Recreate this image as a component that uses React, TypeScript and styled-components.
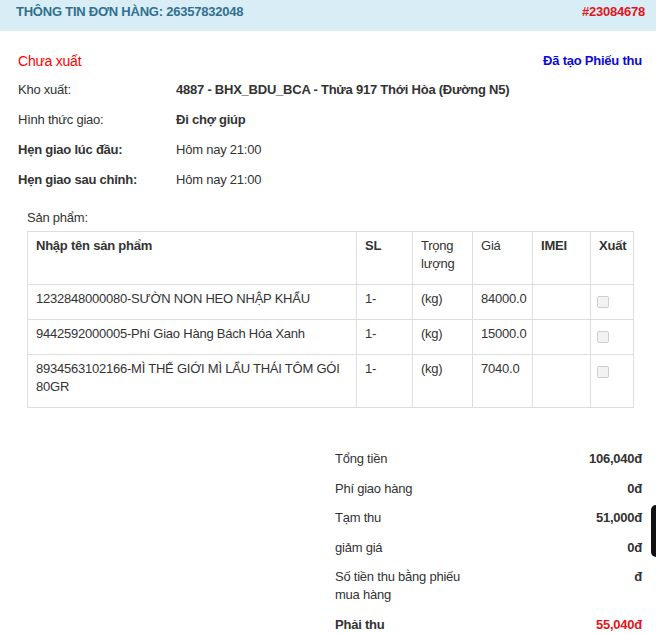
import React from "react";
import styled, { createGlobalStyle } from "styled-components";

const GlobalStyle = createGlobalStyle`
  html, body {
    margin: 0;
    padding: 0;
    background: #fff;
  }
  body {
    font-family: "Liberation Sans", Arial, sans-serif;
    font-size: 13px;
    line-height: 18px;
    letter-spacing: -0.23px;
    color: #333;
  }
  * { box-sizing: border-box; }
`;

const Page = styled.div`
  position: relative;
  width: 656px;
`;

const Header = styled.div`
  height: 31px;
  background: #d9edf7;
  display: flex;
  justify-content: space-between;
  align-items: flex-start;
  padding: 3px 11px 0 16px;
  font-weight: bold;
`;

const HeaderTitle = styled.span`
  color: #31708f;
`;

const OrderCode = styled.span`
  color: #e3151a;
`;

const Body = styled.div`
  padding: 15px 14px 0 18px;
`;

const StatusRow = styled.div`
  display: flex;
  justify-content: space-between;
  align-items: center;
  height: 29px;
  padding: 6px 0 5px;
`;

const Status = styled.span`
  color: #f00;
  font-size: 14px;
  line-height: 18px;
`;

const ReceiptLink = styled.span`
  color: #0b0bd4;
  font-weight: bold;
`;

const InfoRow = styled.div`
  display: grid;
  grid-template-columns: 158px 1fr;
  padding: 6px 0;
`;

const Label = styled.span<{ $bold?: boolean }>`
  font-weight: ${(p) => (p.$bold ? "bold" : "normal")};
`;

const Value = styled.span<{ $bold?: boolean }>`
  font-weight: ${(p) => (p.$bold ? "bold" : "normal")};
`;

const Products = styled.div`
  padding: 14px 9px 0 9px;
`;

const ProductsLabel = styled.div`
  margin-bottom: 4px;
`;

const Table = styled.table`
  width: 606px;
  table-layout: fixed;
  border-collapse: collapse;
`;

const Col = styled.col<{ $w: number }>`
  width: ${(p) => p.$w}px;
`;

const Th = styled.th<{ $light?: boolean }>`
  border: 1px solid #ddd;
  padding: 5px 8px 11px;
  text-align: left;
  vertical-align: top;
  font-weight: ${(p) => (p.$light ? "normal" : "bold")};
`;

const Td = styled.td`
  border: 1px solid #ddd;
  padding: 5px 8px 11px;
  vertical-align: top;
`;

const Check = styled.span`
  display: block;
  width: 12px;
  height: 12px;
  margin: 6px 0 0 -2px;
  border: 1px solid #cfcfcf;
  border-radius: 2px;
  background: #f2f2f2;
`;

const Summary = styled.div`
  width: 307px;
  margin: 36px 0 0 auto;
`;

const SumRow = styled.div`
  display: grid;
  grid-template-columns: 145px 1fr;
  padding: 6px 0 5.5px;
`;

const SumLabel = styled.span<{ $bold?: boolean }>`
  font-weight: ${(p) => (p.$bold ? "bold" : "normal")};
`;

const SumValue = styled.span<{ $red?: boolean }>`
  text-align: right;
  font-weight: bold;
  color: ${(p) => (p.$red ? "#e3151a" : "#333")};
`;

const SideTab = styled.div`
  position: absolute;
  right: 0;
  top: 505px;
  width: 5px;
  height: 52px;
  background: #111;
  border-radius: 6px 0 0 6px;
`;

const info = [
  { label: "Kho xuất:", value: "4887 - BHX_BDU_BCA - Thửa 917 Thới Hòa (Đường N5)", lb: false, vb: true },
  { label: "Hình thức giao:", value: "Đi chợ giúp", lb: false, vb: true },
  { label: "Hẹn giao lúc đầu:", value: "Hôm nay 21:00", lb: true, vb: false },
  { label: "Hẹn giao sau chỉnh:", value: "Hôm nay 21:00", lb: true, vb: false },
];

const columns = [
  { title: "Nhập tên sản phẩm", w: 329, light: false },
  { title: "SL", w: 56, light: false },
  { title: "Trọng lượng", w: 60, light: true },
  { title: "Giá", w: 60, light: true },
  { title: "IMEI", w: 58, light: false },
  { title: "Xuất", w: 43, light: false },
];

const products = [
  { name: "1232848000080-SƯỜN NON HEO NHẬP KHẨU", price: "84000.0" },
  { name: "9442592000005-Phí Giao Hàng Bách Hóa Xanh", price: "15000.0" },
  { name: "8934563102166-MÌ THẾ GIỚI MÌ LẨU THÁI TÔM GÓI 80GR", price: "7040.0" },
];

const sums = [
  { label: "Tổng tiền", value: "106,040đ" },
  { label: "Phí giao hàng", value: "0đ" },
  { label: "Tạm thu", value: "51,000đ" },
  { label: "giảm giá", value: "0đ" },
  { label: "Số tiền thu bằng phiếu mua hàng", value: "đ" },
];

export default function App() {
  return (
    <Page>
      <GlobalStyle />
      <Header>
        <HeaderTitle>THÔNG TIN ĐƠN HÀNG: 26357832048</HeaderTitle>
        <OrderCode>#23084678</OrderCode>
      </Header>
      <Body>
        <StatusRow>
          <Status>Chưa xuất</Status>
          <ReceiptLink>Đã tạo Phiếu thu</ReceiptLink>
        </StatusRow>
        {info.map((r) => (
          <InfoRow key={r.label}>
            <Label $bold={r.lb}>{r.label}</Label>
            <Value $bold={r.vb}>{r.value}</Value>
          </InfoRow>
        ))}
        <Products>
          <ProductsLabel>Sản phẩm:</ProductsLabel>
          <Table>
            <colgroup>
              {columns.map((c) => (
                <Col key={c.title} $w={c.w} />
              ))}
            </colgroup>
            <thead>
              <tr>
                {columns.map((c) => (
                  <Th key={c.title} $light={c.light}>
                    {c.title}
                  </Th>
                ))}
              </tr>
            </thead>
            <tbody>
              {products.map((p) => (
                <tr key={p.name}>
                  <Td>{p.name}</Td>
                  <Td>1-</Td>
                  <Td>(kg)</Td>
                  <Td>{p.price}</Td>
                  <Td />
                  <Td>
                    <Check />
                  </Td>
                </tr>
              ))}
            </tbody>
          </Table>
        </Products>
        <Summary>
          {sums.map((s) => (
            <SumRow key={s.label}>
              <SumLabel>{s.label}</SumLabel>
              <SumValue>{s.value}</SumValue>
            </SumRow>
          ))}
          <SumRow>
            <SumLabel $bold>Phải thu</SumLabel>
            <SumValue $red>55,040đ</SumValue>
          </SumRow>
        </Summary>
      </Body>
      <SideTab />
    </Page>
  );
}
